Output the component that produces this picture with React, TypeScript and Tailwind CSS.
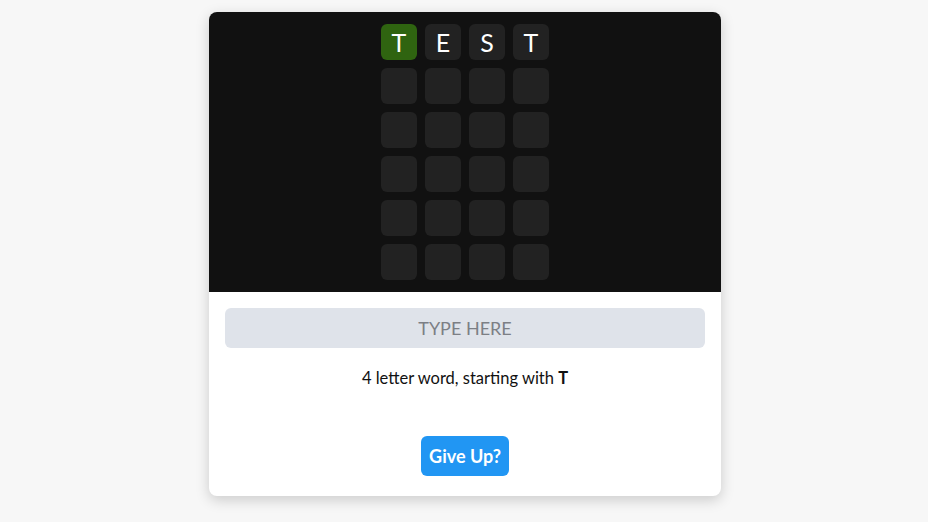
const rows = [
  ["T", "E", "S", "T"],
  ["", "", "", ""],
  ["", "", "", ""],
  ["", "", "", ""],
  ["", "", "", ""],
  ["", "", "", ""],
];

export default function App() {
  return (
    <div
      className="min-h-[522px] bg-[#f7f7f7] flex justify-center pt-3 pl-[2px]"
      style={{ fontFamily: "Lato, 'Noto Sans', sans-serif" }}
    >
      <div className="w-[512px] h-[484px] bg-white rounded-lg overflow-hidden shadow-[0_4px_14px_rgba(0,0,0,0.18)] flex flex-col">
        <div className="h-[280px] bg-[#111111] flex flex-col items-center py-3 gap-2">
          {rows.map((row, r) => (
            <div key={r} className="flex gap-2">
              {row.map((ch, c) => (
                <div
                  key={c}
                  className={`w-9 h-9 rounded-md flex items-center justify-center text-white text-[25px] leading-none ${
                    r === 0 && c === 0 ? "bg-[#2f6410]" : "bg-[#222222]"
                  }`}
                >
                  {ch}
                </div>
              ))}
            </div>
          ))}
        </div>
        <div className="px-4 pt-4 flex flex-col items-center">
          <input
            placeholder="TYPE HERE"
            className="w-full h-10 rounded-md bg-[#dfe3ea] text-center text-[18px] placeholder:text-[#7c7f85] outline-none"
          />
          <p className="mt-[18px] text-[16.5px] leading-6 text-[#111]">
            4 letter word, starting with <b>T</b>
          </p>
          <button className="mt-[46px] w-[88px] h-10 rounded-md bg-[#2196f3] text-white font-bold text-[18px]">
            Give Up?
          </button>
        </div>
      </div>
    </div>
  );
}
